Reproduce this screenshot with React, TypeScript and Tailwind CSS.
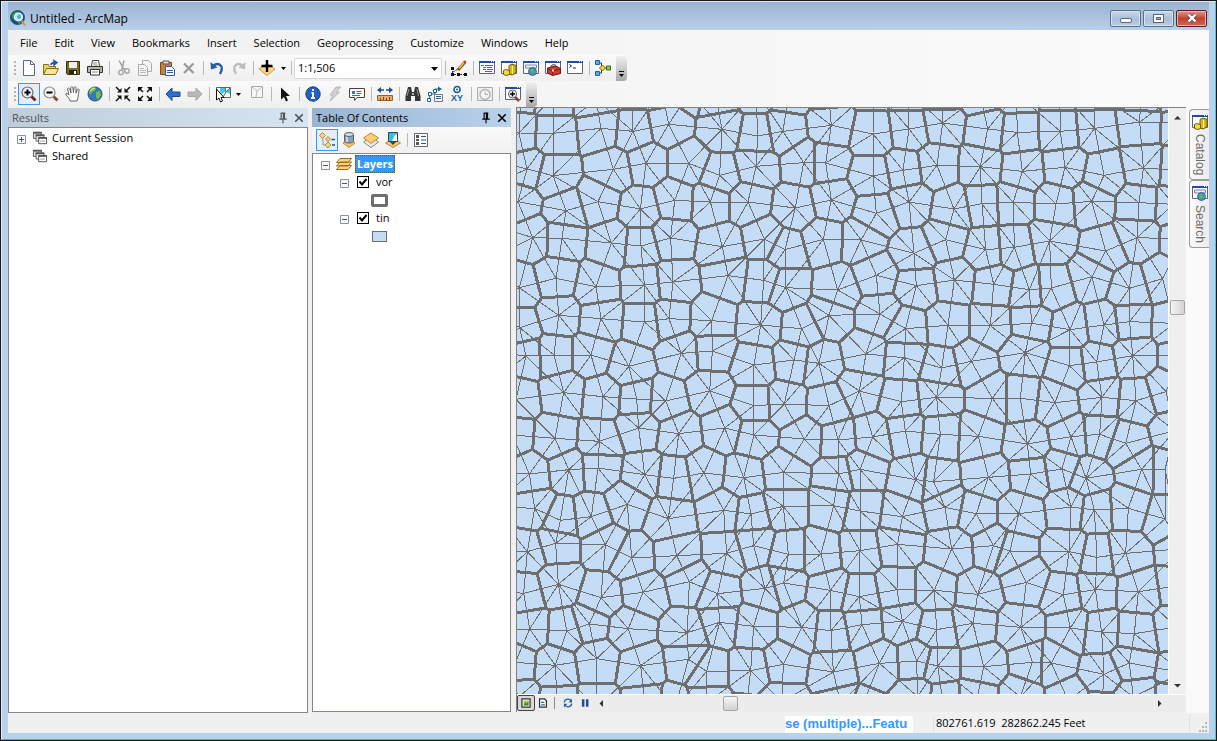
import { useMemo, useState, type ReactNode } from "react"

type Point = [number, number]

interface Triangle {
  v: [number, number, number]
  cx: number
  cy: number
  r2: number
}

interface Tile {
  dx: number
  dy: number
  sites: Point[]
}

// Station coordinates, grouped by map tile. Three units make one screen pixel.
const tiles: Tile[] = [
  {
    dx: 0,
    dy: 0,
    sites: [
      [18, -38], [114, -25], [243, -16], [350, -51], [440, -45], [526, -42], [603, -23], [723, -42], [821, -36], [940, -45],
      [12, 84], [114, 85], [258, 70], [354, 79], [461, 58], [621, 73], [728, 93], [804, 79], [949, 61],
      [36, 192], [114, 212], [295, 193], [393, 175], [521, 175], [614, 211], [723, 184], [866, 173], [932, 174],
      [9, 290], [153, 317], [249, 290], [376, 312], [479, 286], [586, 291], [699, 291], [841, 309], [949, 285],
      [53, 398], [141, 400], [289, 414], [378, 423], [467, 399], [622, 425], [748, 402], [810, 434], [925, 403],
      [13, 548], [123, 520], [243, 545], [388, 540], [474, 531], [639, 512], [746, 526], [812, 548], [968, 555],
      [14, 668], [131, 631], [258, 641], [388, 651], [462, 641], [590, 647], [737, 660], [860, 671], [942, 631],
      [33, 753], [117, 750], [228, 750], [342, 784], [499, 745], [592, 738], [717, 780], [837, 765], [912, 775],
      [3, 883], [146, 863], [264, 875], [365, 882], [452, 888], [584, 858], [716, 902], [808, 897], [942, 902],
      [-90, 40], [-75, 165], [-90, 250], [-65, 360], [-90, 470], [-85, 600], [-70, 740], [-95, 850],
    ],
  },
  {
    dx: 975,
    dy: 0,
    sites: [
      [101, -52], [205, -40], [306, -28], [421, -29], [529, -34], [659, -45], [762, -40], [902, -17], [1010, -30],
      [99, 87], [207, 72], [308, 54], [443, 72], [532, 82], [661, 79], [764, 70], [899, 51], [1027, 55],
      [99, 213], [189, 196], [291, 181], [421, 185], [547, 199], [675, 187], [792, 211], [910, 189], [1014, 196],
      [109, 325], [207, 291], [342, 312], [426, 296], [520, 292], [648, 297], [755, 289], [897, 293], [1000, 298],
      [63, 405], [222, 445], [317, 404], [437, 434], [523, 427], [629, 408], [797, 438], [891, 398], [1028, 402],
      [109, 511], [229, 542], [343, 525], [461, 538], [568, 554], [634, 549], [756, 515], [868, 550], [968, 521],
      [120, 627], [197, 671], [324, 661], [451, 662], [575, 655], [690, 674], [792, 660], [869, 650], [1002, 655],
      [78, 747], [193, 758], [305, 789], [394, 769], [556, 743], [688, 782], [770, 771], [878, 752], [1026, 752],
      [58, 858], [184, 890], [290, 877], [457, 880], [541, 880], [645, 893], [786, 877], [888, 887], [978, 860],
    ],
  },
  {
    dx: -45,
    dy: 885,
    sites: [
      [37, 105], [165, 115], [298, 124], [416, 84], [536, 101], [674, 84], [762, 105], [913, 117], [1014, 120],
      [88, 222], [206, 209], [294, 204], [434, 224], [521, 235], [612, 219], [731, 233], [851, 217], [1016, 222],
      [104, 325], [181, 361], [274, 350], [382, 313], [505, 356], [671, 331], [753, 342], [850, 319], [1001, 317],
      [82, 455], [167, 430], [316, 434], [395, 474], [530, 467], [680, 460], [761, 437], [865, 463], [963, 462],
      [71, 580], [175, 553], [303, 593], [429, 577], [568, 545], [653, 581], [795, 565], [851, 549], [991, 571],
      [89, 687], [200, 693], [268, 672], [385, 686], [562, 698], [659, 667], [761, 679], [905, 682], [993, 692],
      [46, 787], [166, 796], [290, 776], [422, 797], [565, 778], [620, 814], [752, 812], [850, 793], [1000, 816],
      [52, 895], [172, 922], [290, 925], [435, 918], [525, 927], [621, 908], [735, 955], [846, 905], [1022, 912],
      [-30, 220], [-25, 320], [-35, 450], [-40, 570], [-30, 690], [-50, 800],
    ],
  },
  {
    dx: 975,
    dy: 885,
    sites: [
      [98, 111], [196, 93], [301, 103], [415, 109], [562, 132], [693, 110], [779, 103], [857, 130], [1004, 92],
      [60, 208], [227, 239], [281, 245], [445, 232], [572, 222], [666, 207], [738, 235], [905, 208], [975, 209],
      [60, 333], [187, 350], [315, 322], [409, 341], [536, 341], [693, 321], [763, 330], [865, 325], [975, 357],
      [60, 452], [173, 433], [335, 447], [460, 437], [510, 453], [687, 455], [771, 472], [857, 460], [1025, 446],
      [58, 590], [171, 569], [283, 571], [413, 583], [559, 547], [670, 584], [766, 569], [895, 575], [1016, 557],
      [66, 674], [187, 664], [290, 689], [399, 670], [542, 682], [691, 684], [785, 696], [883, 701], [1009, 681],
      [118, 790], [230, 783], [293, 798], [431, 800], [577, 787], [634, 789], [792, 823], [868, 789], [1027, 818],
      [61, 933], [233, 890], [308, 900], [412, 893], [541, 891], [684, 901], [785, 930], [880, 891], [1010, 900],
    ],
  },
]

function makeTriangle(p: Point[], a: number, b: number, c: number): Triangle {
  const [ax, ay] = p[a]
  const [bx, by] = p[b]
  const [cx, cy] = p[c]
  const d = 2 * (ax * (by - cy) + bx * (cy - ay) + cx * (ay - by))
  const a2 = ax * ax + ay * ay
  const b2 = bx * bx + by * by
  const c2 = cx * cx + cy * cy
  const ux = (a2 * (by - cy) + b2 * (cy - ay) + c2 * (ay - by)) / d
  const uy = (a2 * (cx - bx) + b2 * (ax - cx) + c2 * (bx - ax)) / d
  return { v: [a, b, c], cx: ux, cy: uy, r2: (ax - ux) ** 2 + (ay - uy) ** 2 }
}

function edgesOf(t: Triangle): Point[] {
  const [a, b, c] = t.v
  return [[a, b], [b, c], [c, a]]
}

const edgeKey = ([a, b]: Point) => (a < b ? `${a}-${b}` : `${b}-${a}`)

// Bowyer-Watson triangulation; the cells join the circumcentres of neighbours.
function buildMesh() {
  const pts: Point[] = tiles.flatMap((t) => t.sites.map(([x, y]): Point => [x + t.dx, y + t.dy]))
  const n = pts.length
  pts.push([-40000, -30000], [42000, -30000], [1000, 60000])
  let tris = [makeTriangle(pts, n, n + 1, n + 2)]

  for (let i = 0; i < n; i++) {
    const [x, y] = pts[i]
    const bad = tris.filter((t) => (x - t.cx) ** 2 + (y - t.cy) ** 2 < t.r2)
    const count = new Map<string, number>()
    bad.flatMap(edgesOf).forEach((e) => count.set(edgeKey(e), (count.get(edgeKey(e)) ?? 0) + 1))
    const rim = bad.flatMap(edgesOf).filter((e) => count.get(edgeKey(e)) === 1)
    tris = tris.filter((t) => !bad.includes(t)).concat(rim.map(([a, b]) => makeTriangle(pts, a, b, i)))
  }

  const seen = new Map<string, Triangle>()
  let tin = ""
  let vor = ""
  for (const t of tris) {
    for (const e of edgesOf(t)) {
      if (e[0] >= n || e[1] >= n) continue
      const other = seen.get(edgeKey(e))
      if (other) {
        vor += `M${t.cx.toFixed(1)} ${t.cy.toFixed(1)}L${other.cx.toFixed(1)} ${other.cy.toFixed(1)}`
      } else {
        seen.set(edgeKey(e), t)
        tin += `M${pts[e[0]].join(" ")}L${pts[e[1]].join(" ")}`
      }
    }
  }
  return { tin, vor }
}

function Icon({ children, size = "w-4 h-4" }: { children: ReactNode; size?: string }) {
  return (
    <svg className={`${size} shrink-0 overflow-visible`} viewBox="0 0 16 16" fill="none" aria-hidden="true">
      {children}
    </svg>
  )
}

function WindowFrame() {
  return (
    <>
      <path d="M.5 1.5h15v12H.5z" fill="#fff" stroke="#5c6470" />
      <path d="M0 1h16v2H0z" fill="#1f4e9c" />
      <path d="M12 1.5h3" stroke="#dfe9f6" strokeDasharray="1 1" />
    </>
  )
}

const icons: Record<string, ReactNode> = {
  new: <path d="M2.5.5h7l4 4v11h-11zM9.5.5v4h4" fill="#fff" stroke="#5d6b7b" />,
  open: (
    <>
      <path d="M.5 14.5v-10h5l1 2h6v3" fill="#e8cf6c" stroke="#8a6d1c" />
      <path d="M.5 14.5l3-6h12l-3 6z" fill="#f7e596" stroke="#8a6d1c" />
      <path d="M8 5c0-2 2-2.5 4-2.5M11 .5l3 2-3 2.5z" stroke="#1c5aa0" strokeWidth="1.5" fill="#1c5aa0" />
    </>
  ),
  save: (
    <>
      <path d="M1.5 1.5h13v13h-12l-1-1z" fill="#7a6a20" stroke="#38300c" />
      <path d="M4 2h8v6H4z" fill="#eee" />
      <path d="M4 10h8v4H4z" fill="#26241a" />
      <path d="M9 11h2v3H9z" fill="#fff" />
    </>
  ),
  print: (
    <>
      <path d="M4.5 6l1-5.5h6l1 5.5" fill="#fff" stroke="#444" />
      <path d="M.5 6.5h15v6H.5z" fill="#b6b6ae" stroke="#333" />
      <path d="M3.5 9.5h9V15h-9z" fill="#fff" stroke="#333" />
      <path d="M5 12h6M6 3h4M6.5 5h4" stroke="#888" />
      <path d="M13 8h1v1h-1z" fill="#3a3" />
    </>
  ),
  cut: (
    <>
      <path d="M4 .5l5 9M9 .5L7 9" stroke="#a0a0a0" strokeWidth="1.5" />
      <circle cx="6" cy="12.500" r="2.200" stroke="#a8a8a8" strokeWidth="1.5" />
      <circle cx="12" cy="11" r="2.200" stroke="#a8a8a8" strokeWidth="1.5" />
      <path d="M7 8.500l-.5 2M8.500 8.500l2 1" stroke="#a8a8a8" strokeWidth="1.5" />
    </>
  ),
  copy: (
    <>
      <path d="M5.5.5h6l3 3v8h-9z" fill="#f4f4f4" stroke="#aaa" />
      <path d="M1.5 4.5h6l3 3v8h-9z" fill="#f4f4f4" stroke="#aaa" />
      <path d="M3 8.5h4M3 10.5h6M3 12.5h6" stroke="#bbb" />
    </>
  ),
  paste: (
    <>
      <path d="M1.5 2.5h11v12h-11z" fill="#c8822c" stroke="#7c4a10" />
      <path d="M4 1h6v3H4z" fill="#ddd" stroke="#555" />
      <path d="M6.5 6.5h6l3 3v6h-9z" fill="#fff" stroke="#2f5f9c" />
      <path d="M8 10.5h6M8 12.5h6" stroke="#2f5f9c" />
    </>
  ),
  remove: <path d="M3 3.5l9.5 9.5M12.500 3.5L3 13" stroke="#9a9a9a" strokeWidth="2.400" />,
  undo: (
    <>
      <path d="M4 6c5-4 12-1 7 8" stroke="#23609c" strokeWidth="2.400" />
      <path d="M1.500 2l.5 7.500 6.500-2z" fill="#23609c" />
    </>
  ),
  redo: (
    <>
      <path d="M12 6C7 2 0 5 5 14" stroke="#bdbdbd" strokeWidth="2.400" />
      <path d="M14.500 2l-.5 7.500-6.500-2z" fill="#bdbdbd" />
    </>
  ),
  add: (
    <>
      <path d="M8 3.5l8 5.500-8 6.500L0 9z" fill="#fbd684" stroke="#b98a3a" strokeWidth=".8" />
      <path d="M8 0v12M2.500 6h11" stroke="#000" strokeWidth="2.400" />
    </>
  ),
  editor: (
    <>
      <path d="M1.500 8v5M3 14.500h11M2 12l5-3" stroke="#333" strokeDasharray="2 1" />
      <path d="M0 7h3v3H0zM0 13h3v3H0zM6 13h3v3H6zM13 13h3v3h-3z" fill="#111" />
      <path d="M7 10l7-8" stroke="#7a4a12" strokeWidth="3" />
      <path d="M8 8.500l5-6" stroke="#f6c445" strokeWidth="1.5" />
      <path d="M13 1l2 1.500" stroke="#d33" strokeWidth="2" />
    </>
  ),
  toc: (
    <>
      <WindowFrame />
      <path d="M2 5.5h3M4 9.5h3" stroke="#d22" />
      <path d="M6 5.5h8M4 7.5h3M8 7.5h5M8 9.5h6M6 11.5h7" stroke="#1976d2" />
    </>
  ),
  catalog: (
    <>
      <WindowFrame />
      <path d="M8 5.5l3-1.500 4 1.500V13l-4 2-3-1z" fill="#d8b614" stroke="#6d5a06" />
      <path d="M2.500 10.500l2-1 4 1v4l-3 1-3-1z" fill="#f2da37" stroke="#6d5a06" />
      <path d="M11.500 6v8" stroke="#fff3a0" />
    </>
  ),
  search: (
    <>
      <WindowFrame />
      <path d="M2.500 5h11v3h-11z" fill="#eee" stroke="#789" />
      <circle cx="9.500" cy="11.500" r="4" fill="#4490cf" stroke="#1e4f87" strokeWidth=".7" />
      <path d="M7 9l3 0 1 2-2 3-1-2zM11 12l2-1-1 3z" fill="#6db34a" />
    </>
  ),
  toolbox: (
    <>
      <WindowFrame />
      <path d="M6 7c0-3 5-3 6 0" stroke="#222" />
      <path d="M2.500 8l8-2 5 2.500v5l-8 2-5-2.500z" fill="#d43a2c" stroke="#6d1510" />
      <path d="M2.500 8.500l5 2.500 8-2M7.500 11v4" stroke="#7d1912" />
      <path d="M7 9.500h2v2H7z" fill="#eee" />
    </>
  ),
  python: (
    <>
      <WindowFrame />
      <path d="M2.500 4.500l2 1.500-2 1.500M6 8h3" stroke="#222" />
    </>
  ),
  model: (
    <>
      <path d="M4.500 3h2v10h-2M6.500 8h6" stroke="#333" />
      <path d="M.5.5h4v4h-4zM.5 11.500h4v4h-4z" fill="#4fb0ee" stroke="#1c66a6" />
      <path d="M7.500 5l3 3-3 3-3-3z" fill="#f7d13c" stroke="#8a6a0c" />
      <path d="M11.500 6h4v4h-4z" fill="#8ccb4e" stroke="#39721a" />
    </>
  ),
  zoomIn: (
    <>
      <path d="M10.500 10.500l4 4" stroke="#6b2c22" strokeWidth="3" />
      <circle cx="6.500" cy="6.500" r="5.500" fill="#eaf1f8" stroke="#666" strokeWidth="1.200" />
      <path d="M6.500 3.500v6M3.500 6.500h6" stroke="#000" strokeWidth="2" />
    </>
  ),
  zoomOut: (
    <>
      <path d="M10.500 10.500l4 4" stroke="#8a4a38" strokeWidth="3" />
      <circle cx="6.500" cy="6.500" r="5.500" fill="#f4f4f4" stroke="#888" strokeWidth="1.200" />
      <path d="M3.500 6.500h6" stroke="#000" strokeWidth="2" />
    </>
  ),
  hand: (
    <path
      d="M5 15c0-2-2.500-4-4.500-7 1-1.500 2.500 0 3.500 1L2.500 3c.5-1.500 1.800-1 2.200.3L6 7 5.700 1.500c.8-1.500 2-.8 2.200.3L8.500 6.500 9 1.500c1-1.300 2-.6 2 .8v5l1.500-4c1-.9 1.900 0 1.600 1.200C13 9 13.500 11 12 15z"
      fill="#fff"
      stroke="#555"
      strokeWidth=".9"
    />
  ),
  globe: (
    <>
      <circle cx="8" cy="8" r="7" fill="#2f78c4" stroke="#27527f" />
      <path d="M3 3c2-2 5-2 6-1L8 5l-3 1-1 3-2-2zM9 6l4-1 1 4-3 5-2-3z" fill="#7dbb3f" />
      <path d="M3.500 5c1-2 2.500-2.500 4-2.500" stroke="#e6f4ff" />
    </>
  ),
  fixedIn: (
    <>
      <path d="M1 1l4 4M15 1l-4 4M1 15l4-4M15 15l-4-4" stroke="#111" strokeWidth="1.5" />
      <path d="M6.500 6.500H2L6.500 2zM9.500 6.500H14L9.500 2zM6.500 9.500H2L6.500 14zM9.500 9.500H14L9.500 14z" fill="#111" />
    </>
  ),
  fixedOut: (
    <>
      <path d="M2 2l4 4M14 2l-4 4M2 14l4-4M14 14l-4-4" stroke="#111" strokeWidth="1.5" />
      <path d="M1 1h5L1 6zM15 1h-5l5 5zM1 15h5l-5-5zM15 15h-5l5-5z" fill="#111" />
    </>
  ),
  back: <path d="M1 8l6-6v4h8v4.500H7v4z" fill="#2f6fd0" stroke="#1c4690" />,
  forward: <path d="M15 8L9 2v4H1v4.500h8v4z" fill="#b9b9b9" stroke="#a6a6a6" />,
  select: (
    <>
      <path d="M1.500 1.500h14v10h-14z" fill="#fff" stroke="#566" />
      <path d="M5 2h5l1 3-4 3-2-2zM11 6l4-4v6z" fill="#41cbe8" />
      <path d="M10 2l1 4 4-4M8 11l3-5" stroke="#566" />
      <path d="M1.500 3v11L4 12l1.500 4 2-1L6 11.500h3z" fill="#fff" stroke="#111" />
    </>
  ),
  clear: (
    <>
      <path d="M2.500.5h11v11h-11z" fill="#f6f6f6" stroke="#aaa" />
      <path d="M3 1l5 4 5-4M8 5l-1 6" stroke="#bbb" />
    </>
  ),
  pointer: <path d="M4 1.500v12L7 11l2 4.500 2-1-2-4.500h4z" fill="#111" />,
  info: (
    <>
      <circle cx="8" cy="8" r="7.200" fill="#2460c0" stroke="#173f85" />
      <path d="M8 3v2M6.500 7H8v5M6 12h4" stroke="#fff" strokeWidth="1.800" />
    </>
  ),
  bolt: <path d="M9 1h4.500l-4 5h3L3 15l3-6H3z" fill="#d2d2d2" stroke="#aaa" strokeWidth=".8" />,
  popup: (
    <>
      <path d="M.5 2.500h15v9H8l-2.500 3v-3h-5z" fill="#fff" stroke="#444" />
      <path d="M3 5h3v3H3z" fill="#2f78c4" />
      <path d="M7.500 5.500h5M7.500 7.500h5M3 9.500h8" stroke="#2f78c4" />
    </>
  ),
  measure: (
    <>
      <path d="M2 4h12" stroke="#174f91" strokeWidth="1.5" strokeDasharray="5 2" />
      <path d="M0 4l4-3v6zM16 4l-4-3v6z" fill="#174f91" />
      <path d="M.5 9.500h15v5H.5z" fill="#e6ae6a" stroke="#94602a" />
      <path d="M3.500 12v2M6.500 11v3M9.500 12v2M12.500 11v3" stroke="#734312" />
    </>
  ),
  find: (
    <>
      <path d="M3 1h3l1 5h2l1-5h3l2.500 9v5H10v-5H6v5H.5v-5z" fill="#363636" />
      <path d="M4 3L2 10M12 3l1.500 7" stroke="#999" />
      <path d="M7 7h2v2H7z" fill="#aaa" />
    </>
  ),
  route: (
    <>
      <path d="M2 14l1-6h5V3h4" stroke="#1d6391" />
      <path d="M11 .5L15 3l-4 2.500z" fill="#1d6391" />
      <path d="M.5 12.500h3v3h-3zM1.500 6.500h3v3h-3zM6.500 3.500h3v3h-3z" fill="#fff" stroke="#1d6391" />
      <path d="M7.500 8.500h8v7h-8z" fill="#fff" stroke="#778" />
      <path d="M9 10.500h5M9 12.500h5" stroke="#1d6391" />
    </>
  ),
  xy: (
    <>
      <circle cx="8" cy="3.500" r="3" stroke="#175f96" strokeWidth="1.5" />
      <circle cx="8" cy="3.500" r="1" fill="#175f96" />
      <text x="8" y="15" textAnchor="middle" fontSize="9" fontWeight="700" fontFamily="Liberation Sans, sans-serif" fill="#175f96">
        XY
      </text>
    </>
  ),
  time: (
    <>
      <path d="M.5 1.500h15v13H.5z" fill="#eee" stroke="#aaa" />
      <circle cx="8" cy="8.500" r="5" fill="#f6f6f6" stroke="#b2b2b2" strokeWidth="1.400" />
      <path d="M8 5.500v3h3" stroke="#aaa" />
    </>
  ),
  viewer: (
    <>
      <WindowFrame />
      <path d="M10 11l4 4" stroke="#8a3f2c" strokeWidth="2.500" />
      <circle cx="7.500" cy="8" r="4" fill="#fff" stroke="#555" />
      <path d="M7.500 5.500v5M5 8h5" stroke="#000" strokeWidth="1.5" />
    </>
  ),
  byDrawing: (
    <>
      <path d="M4 5v8h4M7 8h2" stroke="#998" />
      <path d="M3.500.5l3 3-3 3-3-3zM9 4.500l2.500 2.500L9 9.500 6.500 7zM9 10l3 3-3 3-3-3z" fill="#fbd27a" stroke="#b98a3a" />
      <path d="M12.500 7.500H16M13 13h3" stroke="#1c5aa0" strokeWidth="1.5" />
    </>
  ),
  bySource: (
    <>
      <path d="M8 7l6 4-6 4.500L2 11z" fill="#fbc860" stroke="#b98a3a" />
      <path d="M3.500 2.500v7c1 2 8 2 9 0v-7" fill="#8ea0b4" stroke="#56616e" />
      <path d="M6 4v6" stroke="#dfe8f2" strokeWidth="1.5" />
      <ellipse cx="8" cy="2.500" rx="4.500" ry="2" fill="#d3dce6" stroke="#56616e" />
    </>
  ),
  byVisibility: (
    <>
      <path d="M8 5l7.500 5L8 15.500.5 10z" fill="#ececec" stroke="#888" />
      <path d="M8 1l7.500 5L8 11.500.5 6z" fill="#fbcf72" stroke="#b98a3a" />
    </>
  ),
  bySelection: (
    <>
      <path d="M8 6l7.500 5L8 15.500.5 11z" fill="#fbc860" stroke="#b98a3a" />
      <path d="M3.500.5h9v9h-9z" fill="#2fbfe0" stroke="#345" />
      <path d="M8 1l1 3 3-2v7H7l2-4z" fill="#fff" />
      <path d="M8 13l3-3H5z" fill="#345" />
    </>
  ),
  options: (
    <>
      <path d="M1.500 1.500h13v13h-13z" fill="#fff" stroke="#667" />
      <path d="M3 3h3v3H3zM3 7h3v2H3zM3 10h3v3H3z" fill="#555" />
      <path d="M8 4.500h5M8 8h5M8 11.500h5" stroke="#24598f" />
    </>
  ),
  session: (
    <>
      <path d="M.5 1.500h9v7h-9z" fill="#ddd" stroke="#555" />
      <path d="M0 1h10v2H0z" fill="#555" />
      <path d="M3.500 4.500h9v7h-9z" fill="#eee" stroke="#555" />
      <path d="M3 4h10v2H3z" fill="#555" />
      <path d="M6.500 7.500h9v7h-9z" fill="#fff" stroke="#444" />
      <path d="M6 7h10v2H6z" fill="#555" />
      <path d="M8 11.500h6" stroke="#999" />
    </>
  ),
  layers: (
    <path
      d="M4 9.500h11.500l-3.500 4H.5zM4 6h11.500L12 10H.5zM4 2.500h11.500L12 6.500H.5z"
      fill="#fcd583"
      stroke="#9c6a1c"
    />
  ),
  app: (
    <>
      <circle cx="7.500" cy="7.500" r="7" fill="#134a86" stroke="#1f5c78" />
      <path d="M2 5c2-4 6-4 8-3L6 5l-1 6-3-3zM7 12l5 0-3 2z" fill="#3c9a4c" />
      <circle cx="8.500" cy="7" r="4" fill="#bfe6f7" stroke="#e9f6fd" strokeWidth="1.200" />
      <path d="M7 6l3-2 1 4-3 1z" fill="#4aa6d8" />
      <path d="M11.500 10.500l3.500 5" stroke="#d8902c" strokeWidth="2" />
    </>
  ),
  dataView: (
    <>
      <path d="M1.500 1.500h13v13h-13z" fill="#fff" stroke="#333" strokeWidth="2" />
      <path d="M4 4h8v8H4z" fill="#a9cf5c" />
      <path d="M4 12l3-6 2 3 3-5v8z" fill="#557f34" />
    </>
  ),
  layoutView: (
    <>
      <path d="M2.500 1.500h8l3 3v10h-11z" fill="#fff" stroke="#333" strokeWidth="2" />
      <path d="M5 6h5v2H5zM5 10h6v2H5z" fill="#2f6ca5" />
    </>
  ),
  refresh: (
    <>
      <path d="M2 7c1-6 9-7 11-2M14 9c-1 6-9 7-11 2" stroke="#1d5fa5" strokeWidth="2" />
      <path d="M14.500 1v6H9zM1.500 15V9H7z" fill="#1d5fa5" />
    </>
  ),
  pause: <path d="M3 2h4v12H3zM9.500 2h4v12h-4z" fill="#1d4f95" />,
  pin: <path d="M5.500 1v8M10 1v8M5 1.500h6M8.500 1v8M3 9.500h10M8 10v5" stroke="currentColor" strokeWidth="1.5" />,
  close: <path d="M3 3l10 10M13 3L3 13" stroke="currentColor" strokeWidth="2.200" />,
}

const menuItems = ["File", "Edit", "View", "Bookmarks", "Insert", "Selection", "Geoprocessing", "Customize", "Windows", "Help"]

function ToolButton({ icon, label, active = false }: { icon: string; label: string; active?: boolean }) {
  return (
    <button
      aria-label={label}
      className={`w-[22px] h-[22px] shrink-0 flex items-center justify-center ${
        active ? "border border-[#3399ff] bg-[#e4effb]" : ""
      }`}
    >
      <Icon>{icons[icon]}</Icon>
    </button>
  )
}

function Separator() {
  return (
    <div className="w-1.5 shrink-0 flex justify-center">
      <div className="w-px h-3.5 bg-[#b8b8b8]" />
    </div>
  )
}

function Grip() {
  return (
    <div className="w-2.5 shrink-0 pl-1.5 flex flex-col gap-0.5">
      {[0, 1, 2, 3].map((i) => (
        <div key={i} className="w-0.5 h-0.5 bg-[#b4b4b4]" />
      ))}
    </div>
  )
}

function Caret() {
  return (
    <svg className="w-[5px] h-[3px] shrink-0" viewBox="0 0 5 3" aria-hidden="true">
      <path d="M0 0h5L2.500 3z" fill="#000" />
    </svg>
  )
}

function Overflow() {
  return (
    <button
      aria-label="Toolbar options"
      className="w-[11px] h-[25px] ml-0.5 pb-1 shrink-0 rounded-r-sm bg-gradient-to-b from-[#f0f0f0] to-[#a8a8a8] flex flex-col items-center justify-end gap-0.5"
    >
      <div className="w-[5px] h-px bg-black" />
      <Caret />
    </button>
  )
}

function StandardToolbar() {
  return (
    <div className="h-[26px] w-fit flex items-center bg-gradient-to-b from-[#fafafa] to-[#efefef]">
      <Grip />
      <ToolButton icon="new" label="New" />
      <ToolButton icon="open" label="Open" />
      <ToolButton icon="save" label="Save" />
      <ToolButton icon="print" label="Print" />
      <Separator />
      <ToolButton icon="cut" label="Cut" />
      <ToolButton icon="copy" label="Copy" />
      <ToolButton icon="paste" label="Paste" />
      <ToolButton icon="remove" label="Delete" />
      <Separator />
      <ToolButton icon="undo" label="Undo" />
      <ToolButton icon="redo" label="Redo" />
      <Separator />
      <ToolButton icon="add" label="Add data" />
      <button aria-label="Add data options" className="w-2.5 h-5 flex items-center justify-center">
        <Caret />
      </button>
      <Separator />
      <div className="relative">
        <select
          aria-label="Map scale"
          className="appearance-none block w-[148px] h-[21px] px-[3px] bg-white border border-[#d4d8dd] rounded-xs text-[11px] leading-[18px]"
        >
          <option>1:1,506</option>
        </select>
        <svg className="absolute right-1 top-[9px] w-[7px] h-1 pointer-events-none" viewBox="0 0 7 4" aria-hidden="true">
          <path d="M0 0h7L3.500 4z" fill="#000" />
        </svg>
      </div>
      <Separator />
      <ToolButton icon="editor" label="Editor toolbar" />
      <Separator />
      <ToolButton icon="toc" label="Table of contents window" />
      <ToolButton icon="catalog" label="Catalog window" />
      <ToolButton icon="search" label="Search window" />
      <ToolButton icon="toolbox" label="Toolbox window" />
      <ToolButton icon="python" label="Python window" />
      <Separator />
      <ToolButton icon="model" label="Model builder" />
      <Overflow />
    </div>
  )
}

function ToolsToolbar() {
  return (
    <div className="h-[26px] w-fit flex items-center bg-gradient-to-b from-[#fafafa] to-[#efefef]">
      <Grip />
      <ToolButton icon="zoomIn" label="Zoom in" active />
      <ToolButton icon="zoomOut" label="Zoom out" />
      <ToolButton icon="hand" label="Pan" />
      <ToolButton icon="globe" label="Full extent" />
      <Separator />
      <ToolButton icon="fixedIn" label="Fixed zoom in" />
      <ToolButton icon="fixedOut" label="Fixed zoom out" />
      <Separator />
      <ToolButton icon="back" label="Previous extent" />
      <ToolButton icon="forward" label="Next extent" />
      <Separator />
      <ToolButton icon="select" label="Select features" />
      <button aria-label="Select features options" className="w-3 h-5 pl-0.5 flex items-center">
        <Caret />
      </button>
      <ToolButton icon="clear" label="Clear selection" />
      <Separator />
      <ToolButton icon="pointer" label="Select elements" />
      <Separator />
      <ToolButton icon="info" label="Identify" />
      <ToolButton icon="bolt" label="Hyperlink" />
      <ToolButton icon="popup" label="HTML popup" />
      <Separator />
      <ToolButton icon="measure" label="Measure" />
      <Separator />
      <ToolButton icon="find" label="Find" />
      <ToolButton icon="route" label="Find route" />
      <ToolButton icon="xy" label="Go to XY" />
      <Separator />
      <ToolButton icon="time" label="Time slider" />
      <Separator />
      <ToolButton icon="viewer" label="Viewer window" />
      <Overflow />
    </div>
  )
}

function TitleBar() {
  return (
    <div className="h-7 shrink-0 px-0.5 flex items-center bg-gradient-to-b from-[#9ab3d0] to-[#b9d0e9]">
      <Icon size="w-4 h-4 mt-1">{icons.app}</Icon>
      <h1 className="flex-1 pl-1 pt-1.5 text-[12px] leading-4">Untitled - ArcMap</h1>
      <div className="flex gap-0.5">
        <button aria-label="Minimize" className="w-[31px] h-[17px] mt-1 flex items-center justify-center rounded-xs border border-[#566f8e] bg-gradient-to-b from-[#c9d9ea] via-[#a9bfd9] to-[#b8cde4] shadow-[inset_0_0_0_1px_#d6e4f2]">
          <div className="w-3 h-[5px] mt-1 bg-white border border-[#5a6675] rounded-xs" />
        </button>
        <button aria-label="Maximize" className="w-[31px] h-[17px] mt-1 flex items-center justify-center rounded-xs border border-[#566f8e] bg-gradient-to-b from-[#c9d9ea] via-[#a9bfd9] to-[#b8cde4] shadow-[inset_0_0_0_1px_#d6e4f2]">
          <div className="w-[11px] h-[9px] p-0.5 bg-white border border-[#5a6675]">
            <div className="h-full bg-[#9ab3d0] border border-[#5a6675]" />
          </div>
        </button>
        <button aria-label="Close" className="w-[31px] h-[17px] mt-1 flex items-center justify-center rounded-xs border border-[#5c1a1c] bg-gradient-to-b from-[#dd9a8f] via-[#c2412f] to-[#cf6a52] shadow-[inset_0_0_0_1px_#e8b5ab]">
          <svg className="w-3 h-2.5" viewBox="0 0 12 10" aria-hidden="true">
            <path d="M2.500 1.500l7 7M9.500 1.500l-7 7" stroke="#6b4a50" strokeWidth="4" />
            <path d="M2.500 1.500l7 7M9.500 1.500l-7 7" stroke="#fff" strokeWidth="2.400" />
          </svg>
        </button>
      </div>
    </div>
  )
}

function PanelHeader({ title, tone }: { title: string; tone: string }) {
  return (
    <div className={`h-[19px] shrink-0 pl-1 pr-[3px] flex items-center gap-1 bg-gradient-to-r ${tone}`}>
      <h2 className="flex-1 text-[11px] leading-[18px]">{title}</h2>
      <button aria-label={`Auto hide ${title}`}>
        <Icon size="w-3 h-3">{icons.pin}</Icon>
      </button>
      <button aria-label={`Close ${title}`}>
        <Icon size="w-3 h-3">{icons.close}</Icon>
      </button>
    </div>
  )
}

function Expander({ plus = false, label }: { plus?: boolean; label: string }) {
  return (
    <button aria-label={label} className="w-[9px] h-[9px] shrink-0 mt-0.5">
      <svg className="w-full h-full" viewBox="0 0 9 9" aria-hidden="true">
        <path d="M.5.5h8v8h-8z" fill="#fafafa" stroke="#919191" />
        <path d={plus ? "M2 4.500h5M4.500 2v5" : "M2 4.500h5"} stroke="#3b56a0" />
      </svg>
    </button>
  )
}

function ResultsPanel() {
  return (
    <section className="w-[300px] shrink-0 flex flex-col pt-px">
      <PanelHeader title="Results" tone="from-[#bfcddb] to-[#d7e4f2] text-[#4c5258]" />
      <ul className="flex-1 bg-white border border-[#828790] pl-2 pt-px text-[11px]">
        <li className="h-[18px] flex items-center">
          <Expander plus label="Expand current session" />
          <span className="pl-[7px] pr-[5px]">
            <Icon size="w-3.5 h-3.5">{icons.session}</Icon>
          </span>
          Current Session
        </li>
        <li className="h-[18px] flex items-center">
          <span className="pl-4 pr-[5px]">
            <Icon size="w-3.5 h-3.5">{icons.session}</Icon>
          </span>
          Shared
        </li>
      </ul>
    </section>
  )
}

function LayerRow({ name, symbol }: { name: string; symbol: string }) {
  const [visible, setVisible] = useState(true)

  return (
    <li>
      <div className="h-[18px] pl-[27px] flex items-center">
        <Expander label={`Collapse ${name}`} />
        <label className="flex items-center pl-2">
          <span className="relative block w-3 h-3">
            <input
              type="checkbox"
              checked={visible}
              onChange={(e) => setVisible(e.target.checked)}
              className="appearance-none block w-3 h-3 bg-white border border-black"
            />
            {visible && (
              <svg className="absolute inset-0 w-3 h-3 pointer-events-none" viewBox="0 0 12 12" aria-hidden="true">
                <path d="M2.500 5.500L5 8.500 9.500 3" fill="none" stroke="#000" strokeWidth="2" />
              </svg>
            )}
          </span>
          <span className="pl-[7px] text-[11px] leading-[18px]">{name}</span>
        </label>
      </div>
      <div className="h-[18px] w-[132px] flex items-center justify-center">
        <div className={symbol} />
      </div>
    </li>
  )
}

function ContentsPanel() {
  return (
    <section className="w-[199px] shrink-0 flex flex-col py-px">
      <PanelHeader title="Table Of Contents" tone="from-[#9ab4d3] to-[#b9d1ea] text-black" />
      <div className="h-[26px] shrink-0 pl-1 flex items-center bg-gradient-to-b from-[#fafafa] to-[#f0f0f0]">
        <ToolButton icon="byDrawing" label="List by drawing order" active />
        <ToolButton icon="bySource" label="List by source" />
        <ToolButton icon="byVisibility" label="List by visibility" />
        <ToolButton icon="bySelection" label="List by selection" />
        <Separator />
        <ToolButton icon="options" label="Options" />
      </div>
      <div className="flex-1 bg-white border border-[#828790] pt-px">
        <div className="h-[18px] pl-2 flex items-center">
          <Expander label="Collapse layers" />
          <span className="pl-1.5 pr-[3px]">
            <Icon>{icons.layers}</Icon>
          </span>
          <span className="h-[18px] px-px bg-[#3399ff] border border-dotted border-[#7a4a10] text-white font-bold text-[11px] leading-4">
            Layers
          </span>
        </div>
        <ul>
          <LayerRow name="vor" symbol="w-[17px] h-[13px] border-3 border-[#6e6e6e] rounded-xs bg-white" />
          <LayerRow name="tin" symbol="w-[15px] h-[11px] border border-[#6e6e6e] bg-[#c5dcf6]" />
        </ul>
      </div>
    </section>
  )
}

function ScrollArrow({ label, d, className }: { label: string; d: string; className: string }) {
  return (
    <button aria-label={label} className={`shrink-0 flex items-center justify-center ${className}`}>
      <svg className="w-[7px] h-[7px]" viewBox="0 0 7 7" aria-hidden="true">
        <path d={d} fill="#333" />
      </svg>
    </button>
  )
}

function MapView() {
  const mesh = useMemo(buildMesh, [])

  return (
    <section className="flex-1 min-w-0 flex flex-col border-t border-l border-[#828282] mb-px">
      <div className="flex-1 min-h-0 flex">
        <svg
          className="flex-1 min-w-0 h-full bg-[#c5dcf6]"
          viewBox="6 9 1953 1758"
          preserveAspectRatio="xMinYMin slice"
          fill="none"
          stroke="#6e6e6e"
          shapeRendering="crispEdges"
          role="img"
          aria-label="Map"
        >
          <path d={mesh.tin} strokeWidth="3" />
          <path d={mesh.vor} strokeWidth="9" strokeLinecap="round" />
        </svg>
        <div className="w-[18px] shrink-0 flex flex-col bg-[#efefef] border-l border-white">
          <ScrollArrow label="Scroll up" d="M0 5.500h7L3.500 2z" className="h-[18px]" />
          <div className="flex-[174]" />
          <div className="h-[15px] mx-px border border-[#a5a5a5] rounded-xs bg-gradient-to-r from-[#f6f6f6] to-[#d2d2d2]" />
          <div className="flex-[361]" />
          <ScrollArrow label="Scroll down" d="M0 2h7L3.500 5.500z" className="h-[18px]" />
        </div>
      </div>
      <div className="h-[18px] shrink-0 pb-px flex items-center bg-[#ececec] border-t border-white">
        <button aria-label="Data view" className="w-[18px] h-4 shrink-0 flex items-center justify-center border border-[#444] rounded-xs bg-[#d8d8d8]">
          <Icon size="w-2.5 h-2.5">{icons.dataView}</Icon>
        </button>
        <button aria-label="Layout view" className="w-4 shrink-0 flex justify-center">
          <Icon size="w-2.5 h-2.5">{icons.layoutView}</Icon>
        </button>
        <div className="w-px h-3 ml-[3px] mr-1 bg-[#8c8c8c]" />
        <button aria-label="Refresh view" className="w-[18px] shrink-0 flex justify-center">
          <Icon size="w-2.5 h-2.5">{icons.refresh}</Icon>
        </button>
        <button aria-label="Pause drawing" className="w-4 shrink-0 flex justify-center">
          <Icon size="w-2.5 h-2.5">{icons.pause}</Icon>
        </button>
        <ScrollArrow label="Scroll left" d="M5 0v7L1.500 3.500z" className="w-[17px] h-4" />
        <div className="flex-[113]" />
        <div className="w-[15px] h-[15px] border border-[#a5a5a5] rounded-xs bg-gradient-to-b from-[#f6f6f6] to-[#d2d2d2]" />
        <div className="flex-[414]" />
        <ScrollArrow label="Scroll right" d="M2 0v7l3.500-3.500z" className="w-[17px] h-4" />
        <div className="w-[18px]" />
      </div>
    </section>
  )
}

function DockTab({ icon, name }: { icon: string; name: string }) {
  return (
    <button className="w-5 pt-1 pb-1 flex flex-col items-center gap-1 rounded-l-sm border border-r-0 border-[#9a9a9a] bg-gradient-to-r from-[#fafafa] to-[#ececec]">
      <Icon>{icons[icon]}</Icon>
      <span className="[writing-mode:vertical-rl] font-['Liberation_Sans',sans-serif] text-[12px] leading-4 text-[#6d6d6d]">{name}</span>
    </button>
  )
}

function StatusBar() {
  return (
    <footer className="h-5 shrink-0 flex items-end justify-end bg-[#f0f0f0] text-[11px]">
      <div className="w-32 h-[17px] whitespace-nowrap bg-white font-['Liberation_Sans',sans-serif] font-bold text-[13px] leading-4 text-[#3399ff]">
        se (multiple)...Featu
      </div>
      <div className="w-[21px] h-4 border-r border-[#e2e2e2]" />
      <div className="w-[256px] h-[18px] pl-0.5 border-r border-[#e2e2e2] whitespace-pre leading-4">802761.619  282862.245 Feet</div>
      <svg className="w-[19px] h-3" viewBox="0 0 19 12" aria-hidden="true">
        <path d="M15 1h2v2h-2zM12 5h2v2h-2zM15 5h2v2h-2zM9 9h2v2H9zM12 9h2v2h-2zM15 9h2v2h-2z" fill="#b8b8b8" />
      </svg>
    </footer>
  )
}

export default function App() {
  return (
    <div className="h-screen bg-[#b9d1ea] border border-[#1a171c] font-['Open_Sans','Noto_Sans',sans-serif] text-black">
      <div className="h-full flex flex-col px-1.5 pb-1.5 border border-t-[#dfe9f4] border-l-[#e6eef7] border-r-[#4cc5dc] border-b-[#35bfd4]">
        <TitleBar />
        <div className="flex-1 min-h-0 flex flex-col bg-[#f0f0f0]">
          <header className="shrink-0 bg-gradient-to-r from-[#f0f0f0] to-[#fbfbfb]">
            <nav className="h-[25px] pl-3 flex items-center gap-[17px] text-[11px]">
              {menuItems.map((item) => (
                <button key={item} className="leading-[18px]">
                  {item}
                </button>
              ))}
            </nav>
            <StandardToolbar />
            <ToolsToolbar />
          </header>
          <main className="flex-1 min-h-0 flex">
            <ResultsPanel />
            <div className="w-1 shrink-0" />
            <ContentsPanel />
            <div className="w-[5px] shrink-0" />
            <MapView />
            <aside className="w-[23px] shrink-0 pt-0.5 flex flex-col items-end bg-[#fafafa]">
              <DockTab icon="catalog" name="Catalog" />
              <DockTab icon="search" name="Search" />
            </aside>
          </main>
          <StatusBar />
        </div>
      </div>
    </div>
  )
}
